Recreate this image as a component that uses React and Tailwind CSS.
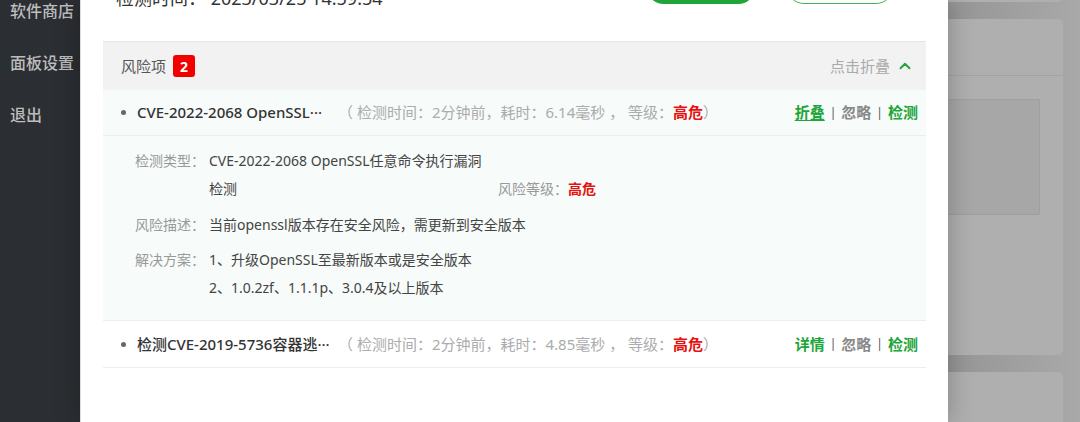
import { ChevronUp } from "lucide-react";

const font = { fontFamily: '"Noto Sans", "Noto Sans CJK SC", sans-serif' };

const risks = [
  {
    title: "CVE-2022-2068 OpenSSL···",
    cost: "6.14",
    action: "折叠",
    open: true,
  },
  {
    title: "检测CVE-2019-5736容器逃···",
    cost: "4.85",
    action: "详情",
    open: false,
  },
];

function RiskRow({ item, h }) {
  return (
    <div
      className={`flex items-center pl-[18px] pr-[8px] border-b border-[#ebeeed] ${h} ${
        item.open ? "bg-[#f7fbf9]" : "bg-white"
      }`}
    >
      <span className="w-[5px] h-[5px] rounded-full bg-[#666] mr-[11px]"></span>
      <span className="w-[201px] text-[15px] text-[#333] font-medium whitespace-nowrap">
        {item.title}
      </span>
      <span className="flex-1 text-[15px] text-[#acacac] whitespace-nowrap">
        （ 检测时间：2分钟前，耗时：{item.cost}毫秒 ， 等级：
        <span className="text-[#e5120f] font-bold">高危</span>）
      </span>
      <div className="flex items-center text-[15px] font-bold whitespace-nowrap">
        <span className={`text-[#20a53a] ${item.open ? "underline underline-offset-2" : ""}`}>
          {item.action}
        </span>
        <span className="mx-[5px] text-[#555] font-normal text-[12px]">|</span>
        <span className="text-[#888]">忽略</span>
        <span className="mx-[5px] text-[#555] font-normal text-[12px]">|</span>
        <span className="text-[#20a53a]">检测</span>
      </div>
    </div>
  );
}

function Details() {
  return (
    <div className="bg-[#f7fbf9] border-b border-[#ebeeed] pl-[32px] pt-[11px] pb-[18px] text-[14px] leading-[28px]">
      <div className="flex items-end">
        <div className="flex w-[363px]">
          <span className="w-[74px] text-[#999] shrink-0">检测类型：</span>
          <span className="text-[#444]">
            CVE-2022-2068 OpenSSL任意命令执行漏洞
            <br />
            检测
          </span>
        </div>
        <div className="flex">
          <span className="text-[#999]">风险等级：</span>
          <span className="text-[#e5120f] font-bold">高危</span>
        </div>
      </div>
      <div className="flex mt-[8px]">
        <span className="w-[74px] text-[#999] shrink-0">风险描述：</span>
        <span className="text-[#444]">当前openssl版本存在安全风险，需更新到安全版本</span>
      </div>
      <div className="flex mt-[7px]">
        <span className="w-[74px] text-[#999] shrink-0">解决方案：</span>
        <span className="text-[#444]">
          1、升级OpenSSL至最新版本或是安全版本
          <br />
          2、1.0.2zf、1.1.1p、3.0.4及以上版本
        </span>
      </div>
    </div>
  );
}

export default function App() {
  return (
    <div className="flex w-[1080px] h-[422px] overflow-hidden" style={font}>
      {/* Sidebar */}
      <aside className="w-[80px] shrink-0 bg-[#2b2e32] flex flex-col pl-[10px] -mt-[3px]">
        {["软件商店", "面板设置", "退出"].map((t) => (
          <div key={t} className="h-[52px] leading-[28px] text-[16px] text-[#bdbdbd] font-medium">
            {t}
          </div>
        ))}
      </aside>

      {/* Modal */}
      <main className="w-[868px] shrink-0 bg-white border-l border-[#dcdcdc] overflow-hidden relative z-10 shadow-[0_0_24px_rgba(0,0,0,0.25)]">
        <div className="-mt-[44px] h-[85px] flex justify-between pl-[35px] pr-[54px]">
          <div className="mt-[29px] leading-[26px] text-[18px] text-[#333]">
            检测时间：&nbsp;2023/03/25 14:59:54
          </div>
          <div className="flex gap-[30px] mt-[12px]">
            <button className="w-[110px] h-[36px] rounded-full bg-[#20a53a] text-white text-[15px]">
              重新检测
            </button>
            <button className="w-[108px] h-[36px] rounded-full border border-[#4caf50] text-[#20a53a] text-[15px]">
              导出报告
            </button>
          </div>
        </div>

        <section className="ml-[22px] mr-[22px]">
          <div className="flex items-center justify-between h-[49px] bg-[#f2f2f2] border-t border-[#e6e6e6] pl-[18px] pr-[12px]">
            <div className="flex items-center">
              <span className="text-[15px] text-[#555]">风险项</span>
              <span className="ml-[7px] w-[22px] h-[22px] rounded-[3px] bg-[#f20000] text-white text-[14px] font-bold flex items-center justify-center">
                2
              </span>
            </div>
            <div className="flex items-center text-[15px] text-[#aaa]">
              点击折叠
              <ChevronUp className="ml-[6px] w-[18px] h-[18px] text-[#20a53a]" strokeWidth={2.5} />
            </div>
          </div>
          <RiskRow item={risks[0]} h="h-[46px]" />
          <Details />
          <RiskRow item={risks[1]} h="h-[47px]" />
        </section>
      </main>

      {/* Dimmed page behind */}
      <div className="flex-1 bg-[#a3a3a3] bg-gradient-to-r from-[#959595] to-[#a9a9a9] flex flex-col gap-[17px] pr-[17px] -mt-[58px]">
        <div className="h-[60px] shrink-0 bg-[#afafaf] rounded-r-[5px]"></div>
        <div className="h-[336px] shrink-0 bg-[#afafaf] rounded-r-[5px] flex flex-col">
          <div className="h-[57px] border-b border-[#a2a2a2]"></div>
          <div className="mt-[23px] w-[92px] h-[116px] bg-[#a7a7a7] border border-[#9f9f9f] border-l-0 rounded-r-[2px]"></div>
        </div>
        <div className="h-[60px] shrink-0 bg-[#afafaf] rounded-r-[5px]"></div>
      </div>
    </div>
  );
}
